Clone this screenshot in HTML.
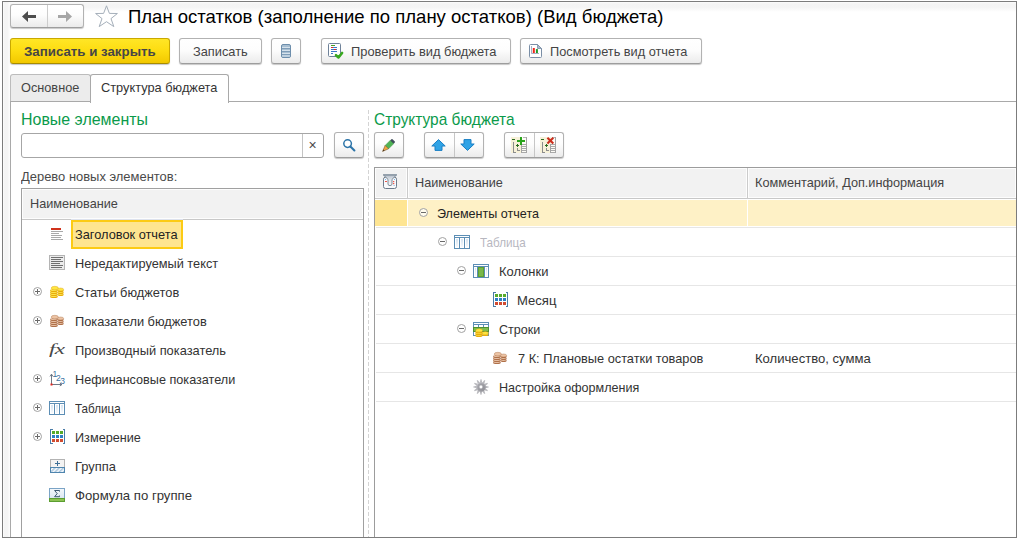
<!DOCTYPE html>
<html lang="ru">
<head>
<meta charset="utf-8">
<title>План остатков (заполнение по плану остатков) (Вид бюджета)</title>
<style>
html,body{margin:0;padding:0;background:#fff;}
body{width:1017px;height:538px;overflow:hidden;position:relative;font-family:"Liberation Sans",sans-serif;font-size:13px;color:#333;}
.abs{position:absolute;}
svg{position:absolute;overflow:visible;}
#frame{position:absolute;left:2px;top:1px;width:1013px;height:535px;border:1px solid #7c7c7c;box-sizing:content-box;}
#leftshade{position:absolute;left:3px;top:2px;width:7px;height:535px;background:linear-gradient(to right,#fdfdfd 0%,#f4f4f4 25%,#f5f5f5 65%,#fdfdfd 100%);}
#topshade{position:absolute;left:3px;top:2px;width:1013px;height:10px;background:linear-gradient(to bottom,#fcfcfc 0%,#f4f4f4 20%,#f5f5f5 55%,#ffffff 100%);}
.btn{position:absolute;box-sizing:border-box;border:1px solid #b2b2b2;border-bottom-color:#9d9d9d;border-radius:3px;background:linear-gradient(to bottom,#ffffff 0%,#fdfdfd 45%,#ebebeb 100%);box-shadow:0 1px 1px rgba(0,0,0,0.22);color:#444;font-size:13px;line-height:24px;white-space:nowrap;}
.btn.y{background:linear-gradient(to bottom,#ffe626 0%,#fddc10 50%,#f2c800 100%);border-color:#c9a800;border-bottom-color:#a88c00;color:#40381a;font-weight:bold;}
.t{position:absolute;white-space:nowrap;line-height:16px;transform-origin:0 0;}
.green{color:#0a9a4a;font-size:16px;line-height:20px;}
.hl{position:absolute;height:1px;background:#e6e6e6;left:376px;width:640px;}
.vl{position:absolute;width:1px;background:#d0d0d0;}
.plus,.minus{position:absolute;width:9px;height:9px;box-sizing:border-box;border:1px solid #a2a2a2;border-radius:50%;background:#fff;}
.plus:before,.minus:before{content:"";position:absolute;left:1px;top:3px;width:5px;height:1px;background:#6a6a6a;}
.plus:after{content:"";position:absolute;left:3px;top:1px;width:1px;height:5px;background:#6a6a6a;}
</style>
</head>
<body>
<div id="topshade"></div>
<div id="leftshade"></div>

<!-- nav buttons -->
<div class="btn" style="left:10px;top:4px;width:74px;height:24px;"></div>
<div class="vl" style="left:47px;top:5px;height:22px;background:#cdcdcd;"></div>
<svg style="left:22px;top:11px" width="14" height="11" viewBox="0 0 14 11"><path d="M0 5.5 L6 0 L6 4 L14 4 L14 7 L6 7 L6 11 Z" fill="#4d4d4d"/></svg>
<svg style="left:58px;top:11px" width="14" height="11" viewBox="0 0 14 11"><path d="M14 5.5 L8 0 L8 4 L0 4 L0 7 L8 7 L8 11 Z" fill="#a6a6a6"/></svg>
<!-- star -->
<svg style="left:94px;top:4px" width="25" height="24" viewBox="0 0 25 24"><path d="M12.5 1.8 L15.4 9.4 L23.4 9.5 L17 14.6 L19.8 22.6 L12.5 17.7 L5.2 22.6 L8 14.6 L1.6 9.5 L9.6 9.4 Z" fill="none" stroke="#a5afba" stroke-width="1"/></svg>
<div class="t" style="left:127.96px;top:5px;font-size:19px;line-height:24px;color:#000;transform:scaleX(0.9746);">План остатков (заполнение по плану остатков) (Вид бюджета)</div>

<!-- command bar -->
<div class="btn y" style="left:10px;top:38px;width:160px;height:26px;"></div>
<div class="t" style="left:23.59px;top:43px;font-size:13.5px;line-height:17px;color:#464646;transform:scaleX(0.9839);font-weight:bold;">Записать и закрыть</div>
<div class="btn" style="left:179px;top:38px;width:83px;height:26px;"></div>
<div class="t" style="left:192.70px;top:43px;font-size:13.5px;line-height:17px;color:#444;transform:scaleX(0.9480);">Записать</div>
<div class="btn" style="left:271px;top:38px;width:30px;height:26px;"></div>
<svg style="left:281px;top:44px" width="10" height="14" viewBox="0 0 10 14"><rect x="0.5" y="0.5" width="9" height="13" rx="1.5" fill="#a8bfd2" stroke="#6d8eac"/><path d="M1 3.5H9M1 6.5H9M1 9.5H9M1 12H9" stroke="#d6e2ec" stroke-width="1"/><path d="M1 4.5H9M1 7.5H9M1 10.5H9" stroke="#7f9db8" stroke-width="1"/></svg>
<div class="btn" style="left:321px;top:38px;width:190px;height:26px;"></div>
<svg style="left:328px;top:43px" width="16" height="16" viewBox="0 0 16 16"><rect x="0.5" y="0.5" width="12" height="13" rx="1" fill="#fff" stroke="#6f8299"/><path d="M3 2.5H7" stroke="#4aa02c"/><path d="M3 4.5H5" stroke="#d93025"/><path d="M5 4.5H9" stroke="#3c78c8"/><path d="M3 6.5H6M8 6.5H9" stroke="#3c78c8"/><path d="M6 6.5H8" stroke="#d93025"/><path d="M3 8.5H9" stroke="#3c78c8"/><path d="M3 10.5H5" stroke="#3c78c8"/><path d="M8 12.2 L10.5 14.4 L14.1 10" fill="none" stroke="#38a81f" stroke-width="2.6" stroke-linecap="round" stroke-linejoin="round"/></svg>
<div class="t" style="left:350.66px;top:43px;font-size:13.5px;line-height:17px;color:#444;transform:scaleX(0.9531);">Проверить вид бюджета</div>
<div class="btn" style="left:520px;top:38px;width:182px;height:26px;"></div>
<svg style="left:529px;top:44px" width="13" height="14" viewBox="0 0 13 14"><path d="M1.5 0.5 H8.5 L12.5 4.5 V12.5 Q12.5 13.5 11.5 13.5 H1.5 Q0.5 13.5 0.5 12.5 V1.5 Q0.5 0.5 1.5 0.5 Z" fill="#fff" stroke="#7a8ea6"/><path d="M8.5 0.5 V4.5 H12.5 Z" fill="#aab8c8" stroke="#7a8ea6" stroke-width="0.8"/><path d="M2.5 2 V9.5 H10" fill="none" stroke="#8d9db5" stroke-width="0.8"/><rect x="3.8" y="4" width="2" height="5" fill="#f0261a"/><rect x="6.9" y="5.1" width="2" height="3.9" fill="#1f9a2a"/></svg>
<div class="t" style="left:549.87px;top:43px;font-size:13.5px;line-height:17px;color:#444;transform:scaleX(0.9444);">Посмотреть вид отчета</div>

<!-- tabs -->
<div class="abs" style="left:10px;top:74px;width:81px;height:28px;box-sizing:border-box;border:1px solid #bcbcbc;border-bottom:none;border-radius:3px 3px 0 0;background:#ececec;"></div>
<div class="abs" style="left:10px;top:101px;width:1006px;height:1px;background:#a9a9a9;"></div>
<div class="abs" style="left:10px;top:102px;width:1px;height:435px;background:#a9a9a9;"></div>
<div class="abs" style="left:90px;top:74px;width:139px;height:29px;box-sizing:border-box;border:1px solid #a9a9a9;border-bottom:none;border-radius:3px 3px 0 0;background:#fff;"></div>
<div class="t" style="left:21.16px;top:79px;font-size:13.5px;line-height:17px;color:#444;transform:scaleX(0.9427);">Основное</div>
<div class="t" style="left:101.02px;top:79px;font-size:13.5px;line-height:17px;color:#333;transform:scaleX(0.9476);">Структура бюджета</div>
<!-- left panel -->
<div class="t" style="left:20.65px;top:109px;font-size:17px;line-height:21px;color:#0b9a4b;transform:scaleX(0.9379);">Новые элементы</div>
<div class="abs" style="left:21px;top:133px;width:303px;height:25px;box-sizing:border-box;border:1px solid #a6a6a6;border-radius:3px;background:#fff;"></div>
<div class="vl" style="left:302px;top:134px;height:23px;background:#c4c4c4;"></div>
<div class="t" style="left:308.4px;top:136px;font-size:14px;line-height:16px;color:#4a4a4a;transform:translateY(0.6px);">×</div>
<div class="btn" style="left:334px;top:132px;width:30px;height:26px;"></div>
<svg style="left:342px;top:138px" width="14" height="14" viewBox="0 0 14 14"><circle cx="5.6" cy="5.6" r="3.8" fill="#fff" stroke="#2c74a8" stroke-width="1.5"/><path d="M8.4 8.4 L12.4 12.4" stroke="#2c74a8" stroke-width="2.1" stroke-linecap="round"/></svg>
<div class="t" style="left:20.92px;top:168px;font-size:13.5px;line-height:17px;color:#4a4a4a;transform:scaleX(0.9587);">Дерево новых элементов:</div>

<div class="abs" style="left:21px;top:188px;width:343px;height:360px;box-sizing:border-box;border:1px solid #a0a0a0;background:#fff;"></div>
<div class="abs" style="left:22px;top:189px;width:341px;height:30px;box-sizing:border-box;background:#f2f2f2;border:1px solid #fdfdfd;"></div>
<div class="abs" style="left:22px;top:219px;width:341px;height:1px;background:#c8c8c8;"></div><div class="abs" style="left:71px;top:219px;width:112px;height:1px;background:#dde2ee;"></div>
<div class="t" style="left:29.56px;top:195px;font-size:13.5px;line-height:17px;color:#444;transform:scaleX(0.9390);">Наименование</div>

<div class="abs" style="left:71px;top:220px;width:112px;height:29px;box-sizing:border-box;border:2px solid #fccb14;background:#fee590;"></div>
<div class="t" style="left:74.80px;top:226px;font-size:13.5px;line-height:17px;color:#222;transform:scaleX(0.9470);">Заголовок отчета</div>
<div class="t" style="left:74.65px;top:255px;font-size:13.5px;line-height:17px;color:#333;transform:scaleX(0.9452);">Нередактируемый текст</div>
<div class="t" style="left:74.92px;top:284px;font-size:13.5px;line-height:17px;color:#333;transform:scaleX(0.9499);">Статьи бюджетов</div>
<div class="t" style="left:74.67px;top:313px;font-size:13.5px;line-height:17px;color:#333;transform:scaleX(0.9499);">Показатели бюджетов</div>
<div class="t" style="left:74.67px;top:342px;font-size:13.5px;line-height:17px;color:#333;transform:scaleX(0.9511);">Производный показатель</div>
<div class="t" style="left:74.67px;top:371px;font-size:13.5px;line-height:17px;color:#333;transform:scaleX(0.9365);">Нефинансовые показатели</div>
<div class="t" style="left:75.09px;top:400px;font-size:13.5px;line-height:17px;color:#333;transform:scaleX(0.8626);">Таблица</div>
<div class="t" style="left:74.66px;top:429px;font-size:13.5px;line-height:17px;color:#333;transform:scaleX(0.9389);">Измерение</div>
<div class="t" style="left:74.64px;top:458px;font-size:13.5px;line-height:17px;color:#333;transform:scaleX(0.9544);">Группа</div>
<div class="t" style="left:74.75px;top:487px;font-size:13.5px;line-height:17px;color:#333;transform:scaleX(0.9749);">Формула по группе</div>

<div class="plus" style="left:33px;top:287px;"></div>
<div class="plus" style="left:33px;top:316px;"></div>
<div class="plus" style="left:33px;top:374px;"></div>
<div class="plus" style="left:33px;top:403px;"></div>
<div class="plus" style="left:33px;top:432px;"></div>

<!-- icon: header -->
<svg style="left:51px;top:228px" width="13" height="12" viewBox="0 0 13 12" shape-rendering="crispEdges"><rect x="0" y="0" width="10" height="2" fill="#d0321c"/><rect x="0" y="3" width="12" height="1" fill="#a9a9a9"/><rect x="0" y="5" width="8" height="1" fill="#a9a9a9"/><rect x="0" y="7" width="11" height="1" fill="#a9a9a9"/><rect x="0" y="9" width="10" height="1" fill="#a9a9a9"/><rect x="0" y="11" width="12" height="1" fill="#a9a9a9"/></svg>
<!-- icon: text -->
<svg style="left:49px;top:255px" width="16" height="15" viewBox="0 0 16 15" shape-rendering="crispEdges"><rect x="0.5" y="0.5" width="15" height="14" fill="#ececec" stroke="#b4b4b4"/><rect x="2" y="2" width="12" height="1" fill="#707070"/><rect x="2" y="4" width="10" height="1" fill="#707070"/><rect x="2" y="6" width="12" height="1" fill="#707070"/><rect x="2" y="8" width="9" height="1" fill="#707070"/><rect x="2" y="10" width="12" height="1" fill="#707070"/><rect x="2" y="12" width="11" height="1" fill="#707070"/></svg>
<!-- icon: coins yellow -->
<svg style="left:50px;top:286px" width="14" height="12" viewBox="0 0 14 12"><ellipse cx="10.6" cy="8.5" rx="3" ry="1.6" fill="#e9ad08"/><ellipse cx="10.4" cy="8.00" rx="2.7" ry="0.75" fill="#fff36a"/><ellipse cx="10.6" cy="6.5" rx="3" ry="1.6" fill="#e9ad08"/><ellipse cx="10.4" cy="6.00" rx="2.7" ry="0.75" fill="#fff36a"/><ellipse cx="10.6" cy="4.5" rx="3" ry="1.6" fill="#e9ad08"/><ellipse cx="10.4" cy="4.00" rx="2.7" ry="0.75" fill="#fff36a"/><ellipse cx="10.6" cy="3.5" rx="3" ry="1.5" fill="#ffe640" stroke="#d89a0a" stroke-width="0.4"/><ellipse cx="3.9" cy="10.5" rx="3.9" ry="1.6" fill="#e9ad08"/><ellipse cx="3.6" cy="10.00" rx="3.5" ry="0.75" fill="#fff36a"/><ellipse cx="3.9" cy="8.5" rx="3.9" ry="1.6" fill="#e9ad08"/><ellipse cx="3.6" cy="8.00" rx="3.5" ry="0.75" fill="#fff36a"/><ellipse cx="3.9" cy="6.5" rx="3.9" ry="1.6" fill="#e9ad08"/><ellipse cx="3.6" cy="6.00" rx="3.5" ry="0.75" fill="#fff36a"/><ellipse cx="3.9" cy="4.5" rx="3.9" ry="1.6" fill="#e9ad08"/><ellipse cx="3.6" cy="4.00" rx="3.5" ry="0.75" fill="#fff36a"/><ellipse cx="4.8" cy="2.1" rx="3.6" ry="1.8" fill="#ffe640" stroke="#d89a0a" stroke-width="0.4"/></svg>
<!-- icon: coins brown -->
<svg style="left:50px;top:315px" width="14" height="12" viewBox="0 0 14 12"><ellipse cx="10.6" cy="8.5" rx="3" ry="1.6" fill="#b0714a"/><ellipse cx="10.4" cy="8.00" rx="2.7" ry="0.75" fill="#f6d8c0"/><ellipse cx="10.6" cy="6.5" rx="3" ry="1.6" fill="#b0714a"/><ellipse cx="10.4" cy="6.00" rx="2.7" ry="0.75" fill="#f6d8c0"/><ellipse cx="10.6" cy="4.5" rx="3" ry="1.6" fill="#b0714a"/><ellipse cx="10.4" cy="4.00" rx="2.7" ry="0.75" fill="#f6d8c0"/><ellipse cx="10.6" cy="3.5" rx="3" ry="1.5" fill="#ecc3a4" stroke="#a5673d" stroke-width="0.4"/><ellipse cx="3.9" cy="10.5" rx="3.9" ry="1.6" fill="#b0714a"/><ellipse cx="3.6" cy="10.00" rx="3.5" ry="0.75" fill="#f6d8c0"/><ellipse cx="3.9" cy="8.5" rx="3.9" ry="1.6" fill="#b0714a"/><ellipse cx="3.6" cy="8.00" rx="3.5" ry="0.75" fill="#f6d8c0"/><ellipse cx="3.9" cy="6.5" rx="3.9" ry="1.6" fill="#b0714a"/><ellipse cx="3.6" cy="6.00" rx="3.5" ry="0.75" fill="#f6d8c0"/><ellipse cx="3.9" cy="4.5" rx="3.9" ry="1.6" fill="#b0714a"/><ellipse cx="3.6" cy="4.00" rx="3.5" ry="0.75" fill="#f6d8c0"/><ellipse cx="4.8" cy="2.1" rx="3.6" ry="1.8" fill="#ecc3a4" stroke="#a5673d" stroke-width="0.4"/></svg>
<!-- icon: fx -->
<div class="t" style="left:48.5px;top:340px;font-family:'Liberation Serif',serif;font-style:italic;font-size:14.5px;line-height:18px;color:#484848;letter-spacing:-0.5px;transform:scaleX(1.6);">fx</div>
<!-- icon: 123 -->
<svg style="left:49px;top:371px" width="16" height="16" viewBox="0 0 16 16"><path d="M2.5 13.5 V3.5 M1 5.4 L2.5 3.2 L4 5.4 M2.5 13.5 H12.5 M10.8 12 L13 13.5 L10.8 15" fill="none" stroke="#5d6b7a" stroke-width="0.9"/><rect x="1.5" y="12.5" width="2" height="2" fill="#e8261c"/><text x="3.6" y="6.4" font-family="Liberation Sans, sans-serif" font-size="8.5" fill="#3b73a2">1</text><text x="7" y="9.6" font-family="Liberation Sans, sans-serif" font-size="8.5" fill="#3b73a2">2</text><text x="11.2" y="12.6" font-family="Liberation Sans, sans-serif" font-size="8.5" fill="#3b73a2">3</text></svg>
<!-- icon: table -->
<svg style="left:49px;top:401px" width="16" height="14" viewBox="0 0 16 14" shape-rendering="crispEdges"><defs><linearGradient id="tg" x1="0" y1="0" x2="0" y2="1"><stop offset="0" stop-color="#d3e2f0"/><stop offset="1" stop-color="#f7fafd"/></linearGradient></defs><rect x="0.5" y="0.5" width="15" height="13" fill="#fff" stroke="#5c8eb5"/><rect x="1" y="2" width="14" height="1" fill="#5c8eb5"/><rect x="5" y="3" width="1" height="10" fill="#5c8eb5"/><rect x="10" y="3" width="1" height="10" fill="#5c8eb5"/><rect x="2" y="4" width="2" height="8" fill="url(#tg)"/><rect x="7" y="4" width="2" height="8" fill="url(#tg)"/><rect x="12" y="4" width="2" height="8" fill="url(#tg)"/></svg>
<!-- icon: dimension -->
<svg style="left:50px;top:429px" width="15" height="15" viewBox="0 0 15 15" shape-rendering="crispEdges"><path d="M2.5 0.5 H0.5 V14.5 H2.5 M12.5 0.5 H14.5 V14.5 H12.5" fill="none" stroke="#4a7ca8"/><g fill="#58ab2b"><rect x="2" y="2" width="3" height="3"/><rect x="6" y="2" width="3" height="3"/><rect x="10" y="2" width="3" height="3"/></g><g fill="#2e80c4"><rect x="2" y="6" width="3" height="3"/><rect x="6" y="6" width="3" height="3"/><rect x="10" y="6" width="3" height="3"/></g><g fill="#d14b30"><rect x="2" y="10" width="3" height="3"/><rect x="6" y="10" width="3" height="3"/><rect x="10" y="10" width="3" height="3"/></g></svg>
<!-- icon: group -->
<svg style="left:50px;top:459px" width="15" height="14" viewBox="0 0 15 14"><defs><pattern id="hat" width="3" height="3" patternUnits="userSpaceOnUse" patternTransform="rotate(45)"><rect width="3" height="3" fill="#fff"/><rect width="1.6" height="3" fill="#a9c6de"/></pattern></defs><rect x="0.5" y="0.5" width="14" height="8" fill="#f3f3f3" stroke="#b3b3b3" shape-rendering="crispEdges"/><path d="M7.5 2 V7 M5 4.5 H10" stroke="#3d6e96" stroke-width="1" shape-rendering="crispEdges"/><rect x="0.5" y="8.5" width="14" height="5" fill="url(#hat)" stroke="#4f85ae" shape-rendering="crispEdges"/></svg>
<!-- icon: sigma -->
<svg style="left:49px;top:488px" width="16" height="14" viewBox="0 0 16 14"><defs><linearGradient id="sg" x1="0" y1="0" x2="0" y2="1"><stop offset="0" stop-color="#f4f8fc"/><stop offset="1" stop-color="#dbe6f1"/></linearGradient></defs><rect x="0.5" y="0.5" width="15" height="10" fill="url(#sg)" stroke="#7ba4c6" shape-rendering="crispEdges"/><path d="M10.5 3.6 V2.5 H5.6 L8.2 5.6 L5.6 8.7 H10.5 V7.6" fill="none" stroke="#34506c" stroke-width="0.95"/><rect x="0.5" y="10.5" width="15" height="3" fill="#8cc152" stroke="#5b9e31" shape-rendering="crispEdges"/></svg>

<!-- splitter -->
<div class="abs" style="left:368px;top:110px;width:1px;height:428px;background:repeating-linear-gradient(to bottom,#d4d4d4 0,#d4d4d4 4px,transparent 4px,transparent 6px);"></div>
<!-- right panel -->
<div class="t" style="left:374.24px;top:109px;font-size:17px;line-height:21px;color:#0b9a4b;transform:scaleX(0.9086);">Структура бюджета</div>
<div class="btn" style="left:374px;top:132px;width:30px;height:26px;"></div>
<svg style="left:381px;top:138px" width="15" height="15" viewBox="0 0 15 15"><g transform="rotate(45 7.5 7.5)"><rect x="5.1" y="0.2" width="4.8" height="3" rx="0.8" fill="#414d5c"/><rect x="5.1" y="2.8" width="4.8" height="7" fill="#50b455" stroke="#3a8f40" stroke-width="0.5"/><path d="M5.1 9.8 H9.9 L7.5 15.8 Z" fill="#f2a83f" stroke="#7a5a30" stroke-width="0.6"/><path d="M6.7 13.8 H8.3 L7.5 15.9 Z" fill="#4a3218"/></g></svg>
<div class="btn" style="left:424px;top:132px;width:60px;height:26px;"></div>
<div class="vl" style="left:454px;top:133px;height:24px;background:#c6c6c6;"></div>
<svg style="left:431px;top:139px" width="15" height="12" viewBox="0 0 15 12"><path d="M7.5 0.6 L14.2 7 H11 V11.4 H4 V7 H0.8 Z" fill="#2fa3e6" stroke="#1a7fc4" stroke-width="1" stroke-linejoin="round"/></svg>
<svg style="left:460px;top:139px" width="15" height="12" viewBox="0 0 15 12"><path d="M7.5 11.4 L14.2 5 H11 V0.6 H4 V5 H0.8 Z" fill="#2fa3e6" stroke="#1a7fc4" stroke-width="1" stroke-linejoin="round"/></svg>
<div class="btn" style="left:504px;top:132px;width:60px;height:26px;"></div>
<div class="vl" style="left:534px;top:133px;height:24px;background:#c6c6c6;"></div>
<!-- add/remove level icons -->
<svg style="left:511px;top:137px" width="16" height="16" viewBox="0 0 16 16"><g shape-rendering="crispEdges"><rect x="0" y="0" width="11" height="16" fill="#f7f1d8"/><rect x="11" y="0" width="4" height="16" fill="#fdfcf6"/><rect x="15" y="0" width="1" height="16" fill="#a4a4a4"/><rect x="12" y="0" width="3" height="1" fill="#b4b4b4"/><rect x="10" y="7" width="1" height="9" fill="#a4a4a4"/><path d="M11 7.5H15M11 9.5H15M11 11.5H15M11 13.5H15M11 15.5H15" stroke="#a9a9a9"/><rect x="1" y="2" width="3" height="1" fill="#2d6a1e"/><path d="M2.5 5 V15.5 H4.5" fill="none" stroke="#8c8c8c"/><path d="M6.5 11 V13.5 H9" fill="none" stroke="#8c8c8c"/><rect x="5" y="8" width="3" height="1" fill="#2d6a1e"/><rect x="6" y="7" width="1" height="3" fill="#2d6a1e"/><rect x="6" y="3" width="8" height="2" fill="#2ba41c"/><rect x="9" y="0" width="2" height="8" fill="#2ba41c"/></g></svg>
<svg style="left:540.2px;top:137px" width="16" height="16" viewBox="0 0 16 16"><g shape-rendering="crispEdges"><rect x="0" y="0" width="11" height="16" fill="#f7f1d8"/><rect x="11" y="0" width="4" height="16" fill="#fdfcf6"/><rect x="15" y="0" width="1" height="16" fill="#a4a4a4"/><rect x="12" y="0" width="3" height="1" fill="#b4b4b4"/><rect x="10" y="7" width="1" height="9" fill="#a4a4a4"/><path d="M11 7.5H15M11 9.5H15M11 11.5H15M11 13.5H15M11 15.5H15" stroke="#a9a9a9"/><rect x="1" y="2" width="3" height="1" fill="#2d6a1e"/><path d="M2.5 5 V15.5 H4.5" fill="none" stroke="#8c8c8c"/><path d="M6.5 11 V13.5 H9" fill="none" stroke="#8c8c8c"/><rect x="5" y="8" width="3" height="1" fill="#2d6a1e"/><rect x="6" y="7" width="1" height="3" fill="#2d6a1e"/></g><path d="M7.4 0.7 L13.3 6.4 M13.3 0.7 L7.4 6.4" stroke="#cc2d1d" stroke-width="2.1"/></svg>

<div class="abs" style="left:374px;top:167px;width:660px;height:380px;box-sizing:border-box;border:1px solid #9c9c9c;background:#fff;"></div>
<div class="abs" style="left:375px;top:168px;width:32px;height:30px;box-sizing:border-box;background:#f2f2f2;border:1px solid #fdfdfd;"></div>
<div class="abs" style="left:408px;top:168px;width:339px;height:30px;box-sizing:border-box;background:#f2f2f2;border:1px solid #fdfdfd;"></div>
<div class="abs" style="left:748px;top:168px;width:268px;height:30px;box-sizing:border-box;background:#f2f2f2;border:1px solid #fdfdfd;"></div>
<div class="abs" style="left:375px;top:198px;width:641px;height:1px;background:#c8c8c8;"></div>
<div class="vl" style="left:407px;top:168px;height:31px;background:#cbcbcb;"></div>
<div class="vl" style="left:747px;top:168px;height:31px;background:#cbcbcb;"></div>
<!-- filter icon -->
<svg style="left:383px;top:174px" width="14" height="15" viewBox="0 0 14 15"><defs><linearGradient id="fg" x1="0" y1="0" x2="0" y2="1"><stop offset="0" stop-color="#b4bdc8"/><stop offset="0.45" stop-color="#dfe4ea"/><stop offset="1" stop-color="#f8f9fb"/></linearGradient></defs><rect x="0.5" y="3.2" width="13" height="11.3" rx="2" fill="#f9fafc" stroke="#6c7b8b"/><path d="M0.4 0.9 H13.6 L9 5.4 V10 Q9 11.6 7 11.6 Q5 11.6 5 10 V5.4 Z" fill="url(#fg)" stroke="#73818f" stroke-width="0.9" stroke-linejoin="round"/><rect x="0" y="0.3" width="14" height="1.3" rx="0.6" fill="#8c99a6"/><rect x="2" y="5" width="1" height="1" fill="#7db4e8"/><rect x="2" y="7" width="2" height="1" fill="#f0564a"/><rect x="11" y="5" width="1" height="1" fill="#7db4e8"/><rect x="10" y="7" width="1.3" height="1.2" fill="#f0564a"/><rect x="10" y="9" width="1.3" height="1.2" fill="#f0564a"/><rect x="10.5" y="11" width="1.3" height="1" fill="#9fc4e8"/></svg>
<div class="t" style="left:415.46px;top:174px;font-size:13.5px;line-height:17px;color:#444;transform:scaleX(0.9390);">Наименование</div>
<div class="t" style="left:755.46px;top:174px;font-size:13.5px;line-height:17px;color:#444;transform:scaleX(0.9417);">Комментарий, Доп.информация</div>

<div class="abs" style="left:375px;top:200px;width:32px;height:26px;background:#fee592;"></div>
<div class="abs" style="left:408px;top:200px;width:339px;height:26px;background:#fef1c6;"></div>
<div class="abs" style="left:748px;top:200px;width:268px;height:26px;background:#fef1c6;"></div>
<div class="hl" style="top:227px;"></div>
<div class="hl" style="top:256px;"></div>
<div class="hl" style="top:285px;"></div>
<div class="hl" style="top:314px;"></div>
<div class="hl" style="top:343px;"></div>
<div class="hl" style="top:372px;"></div>
<div class="hl" style="top:401px;"></div>

<div class="minus" style="left:419px;top:208px;background:#fffcee;"></div>
<div class="minus" style="left:438px;top:237px;"></div>
<div class="minus" style="left:457px;top:266px;"></div>
<div class="minus" style="left:457px;top:324px;"></div>

<div class="t" style="left:436.65px;top:205px;font-size:13.5px;line-height:17px;color:#222;transform:scaleX(0.9310);">Элементы отчета</div>
<div class="t" style="left:480.19px;top:234px;font-size:13.5px;line-height:17px;color:#b7b7bf;transform:scaleX(0.8645);">Таблица</div>
<div class="t" style="left:498.54px;top:263px;font-size:13.5px;line-height:17px;color:#333;transform:scaleX(0.9584);">Колонки</div>
<div class="t" style="left:517.43px;top:292px;font-size:13.5px;line-height:17px;color:#333;transform:scaleX(0.9675);">Месяц</div>
<div class="t" style="left:498.94px;top:321px;font-size:13.5px;line-height:17px;color:#333;transform:scaleX(0.9266);">Строки</div>
<div class="t" style="left:518.44px;top:350px;font-size:13.5px;line-height:17px;color:#333;transform:scaleX(0.9459);">7 К: Плановые остатки товаров</div>
<div class="t" style="left:755.43px;top:350px;font-size:13.5px;line-height:17px;color:#333;transform:scaleX(0.9688);">Количество, сумма</div>
<div class="t" style="left:498.57px;top:379px;font-size:13.5px;line-height:17px;color:#333;transform:scaleX(0.9295);">Настройка оформления</div>

<!-- row icons -->
<svg style="left:454px;top:235px" width="16" height="14" viewBox="0 0 16 14" shape-rendering="crispEdges"><rect x="0.5" y="0.5" width="15" height="13" fill="#fff" stroke="#5c8eb5"/><rect x="1" y="2" width="14" height="1" fill="#5c8eb5"/><rect x="5" y="3" width="1" height="10" fill="#5c8eb5"/><rect x="10" y="3" width="1" height="10" fill="#5c8eb5"/><rect x="2" y="4" width="2" height="8" fill="url(#tg)"/><rect x="7" y="4" width="2" height="8" fill="url(#tg)"/><rect x="12" y="4" width="2" height="8" fill="url(#tg)"/></svg>
<svg style="left:473px;top:264px" width="16" height="14" viewBox="0 0 16 14" shape-rendering="crispEdges"><rect x="0.5" y="0.5" width="15" height="13" fill="#fff" stroke="#5c8eb5"/><rect x="1" y="2" width="14" height="1" fill="#5c8eb5"/><rect x="4" y="3" width="1" height="10" fill="#5c8eb5"/><rect x="11" y="3" width="1" height="10" fill="#5c8eb5"/><rect x="2" y="4" width="1" height="8" fill="url(#tg)"/><rect x="13" y="4" width="1" height="8" fill="url(#tg)"/><rect x="5" y="3" width="6" height="10" fill="#5da130"/><rect x="6" y="4" width="4" height="8" fill="#79b84a"/></svg>
<svg style="left:493px;top:292px" width="15" height="15" viewBox="0 0 15 15" shape-rendering="crispEdges"><path d="M2.5 0.5 H0.5 V14.5 H2.5 M12.5 0.5 H14.5 V14.5 H12.5" fill="none" stroke="#4a7ca8"/><g fill="#58ab2b"><rect x="2" y="2" width="3" height="3"/><rect x="6" y="2" width="3" height="3"/><rect x="10" y="2" width="3" height="3"/></g><g fill="#2e80c4"><rect x="2" y="6" width="3" height="3"/><rect x="6" y="6" width="3" height="3"/><rect x="10" y="6" width="3" height="3"/></g><g fill="#d14b30"><rect x="2" y="10" width="3" height="3"/><rect x="6" y="10" width="3" height="3"/><rect x="10" y="10" width="3" height="3"/></g></svg>
<svg style="left:473px;top:322px" width="16" height="16" viewBox="0 0 16 16"><g shape-rendering="crispEdges"><rect x="0.5" y="0.5" width="15" height="13" fill="#fff" stroke="#5c8eb5"/><rect x="1" y="2" width="14" height="1" fill="#5c8eb5"/><rect x="5" y="3" width="1" height="2" fill="#5c8eb5"/><rect x="10" y="3" width="1" height="2" fill="#5c8eb5"/><rect x="0" y="5" width="16" height="5" fill="#4f9030"/><rect x="1" y="6" width="14" height="3" fill="#7dbd4e"/></g><ellipse cx="12.3" cy="12.5" rx="3.2" ry="1.5" fill="#e9ad08"/><ellipse cx="12.1" cy="12.0" rx="2.9" ry="0.75" fill="#fff36a"/><ellipse cx="12.3" cy="11" rx="3.2" ry="1.5" fill="#ffe640" stroke="#d89a0a" stroke-width="0.4"/><ellipse cx="5.9" cy="13.6" rx="3.6" ry="1.5" fill="#e9ad08"/><ellipse cx="5.7" cy="13.1" rx="3.2" ry="0.75" fill="#fff36a"/><ellipse cx="5.9" cy="11.8" rx="3.6" ry="1.5" fill="#e9ad08"/><ellipse cx="5.7" cy="11.3" rx="3.2" ry="0.75" fill="#fff36a"/><ellipse cx="5.9" cy="10" rx="3.6" ry="1.5" fill="#e9ad08"/><ellipse cx="5.7" cy="9.5" rx="3.2" ry="0.75" fill="#fff36a"/><ellipse cx="6.2" cy="8.4" rx="3.4" ry="1.6" fill="#ffe640" stroke="#d89a0a" stroke-width="0.4"/></svg>
<svg style="left:493px;top:352px" width="14" height="12" viewBox="0 0 14 12"><ellipse cx="10.6" cy="8.5" rx="3" ry="1.6" fill="#b0714a"/><ellipse cx="10.4" cy="8.00" rx="2.7" ry="0.75" fill="#f6d8c0"/><ellipse cx="10.6" cy="6.5" rx="3" ry="1.6" fill="#b0714a"/><ellipse cx="10.4" cy="6.00" rx="2.7" ry="0.75" fill="#f6d8c0"/><ellipse cx="10.6" cy="4.5" rx="3" ry="1.6" fill="#b0714a"/><ellipse cx="10.4" cy="4.00" rx="2.7" ry="0.75" fill="#f6d8c0"/><ellipse cx="10.6" cy="3.5" rx="3" ry="1.5" fill="#ecc3a4" stroke="#a5673d" stroke-width="0.4"/><ellipse cx="3.9" cy="10.5" rx="3.9" ry="1.6" fill="#b0714a"/><ellipse cx="3.6" cy="10.00" rx="3.5" ry="0.75" fill="#f6d8c0"/><ellipse cx="3.9" cy="8.5" rx="3.9" ry="1.6" fill="#b0714a"/><ellipse cx="3.6" cy="8.00" rx="3.5" ry="0.75" fill="#f6d8c0"/><ellipse cx="3.9" cy="6.5" rx="3.9" ry="1.6" fill="#b0714a"/><ellipse cx="3.6" cy="6.00" rx="3.5" ry="0.75" fill="#f6d8c0"/><ellipse cx="3.9" cy="4.5" rx="3.9" ry="1.6" fill="#b0714a"/><ellipse cx="3.6" cy="4.00" rx="3.5" ry="0.75" fill="#f6d8c0"/><ellipse cx="4.8" cy="2.1" rx="3.6" ry="1.8" fill="#ecc3a4" stroke="#a5673d" stroke-width="0.4"/></svg>
<svg style="left:473px;top:379px" width="16" height="16" viewBox="-8 -8 16 16"><defs><linearGradient id="gg" gradientUnits="userSpaceOnUse" x1="-6" y1="-6" x2="6" y2="6"><stop offset="0" stop-color="#d2d2d6"/><stop offset="1" stop-color="#707076"/></linearGradient><linearGradient id="gb" gradientUnits="userSpaceOnUse" x1="-4" y1="-4" x2="4" y2="4"><stop offset="0" stop-color="#cfcfd4"/><stop offset="1" stop-color="#909096"/></linearGradient></defs><g fill="url(#gg)"><path d="M-1.2 -4 L-0.55 -7.7 H0.55 L1.2 -4 Z" transform="rotate(0)"/><path d="M-1.2 -4 L-0.55 -7.7 H0.55 L1.2 -4 Z" transform="rotate(30)"/><path d="M-1.2 -4 L-0.55 -7.7 H0.55 L1.2 -4 Z" transform="rotate(60)"/><path d="M-1.2 -4 L-0.55 -7.7 H0.55 L1.2 -4 Z" transform="rotate(90)"/><path d="M-1.2 -4 L-0.55 -7.7 H0.55 L1.2 -4 Z" transform="rotate(120)"/><path d="M-1.2 -4 L-0.55 -7.7 H0.55 L1.2 -4 Z" transform="rotate(150)"/><path d="M-1.2 -4 L-0.55 -7.7 H0.55 L1.2 -4 Z" transform="rotate(180)"/><path d="M-1.2 -4 L-0.55 -7.7 H0.55 L1.2 -4 Z" transform="rotate(210)"/><path d="M-1.2 -4 L-0.55 -7.7 H0.55 L1.2 -4 Z" transform="rotate(240)"/><path d="M-1.2 -4 L-0.55 -7.7 H0.55 L1.2 -4 Z" transform="rotate(270)"/><path d="M-1.2 -4 L-0.55 -7.7 H0.55 L1.2 -4 Z" transform="rotate(300)"/><path d="M-1.2 -4 L-0.55 -7.7 H0.55 L1.2 -4 Z" transform="rotate(330)"/></g><circle r="4.7" fill="url(#gb)"/><circle r="2.9" fill="none" stroke="#8c8c92" stroke-width="1.6" opacity="0.55"/><circle r="1.4" fill="#fff"/></svg>

<div id="frame"></div>
</body>
</html>
